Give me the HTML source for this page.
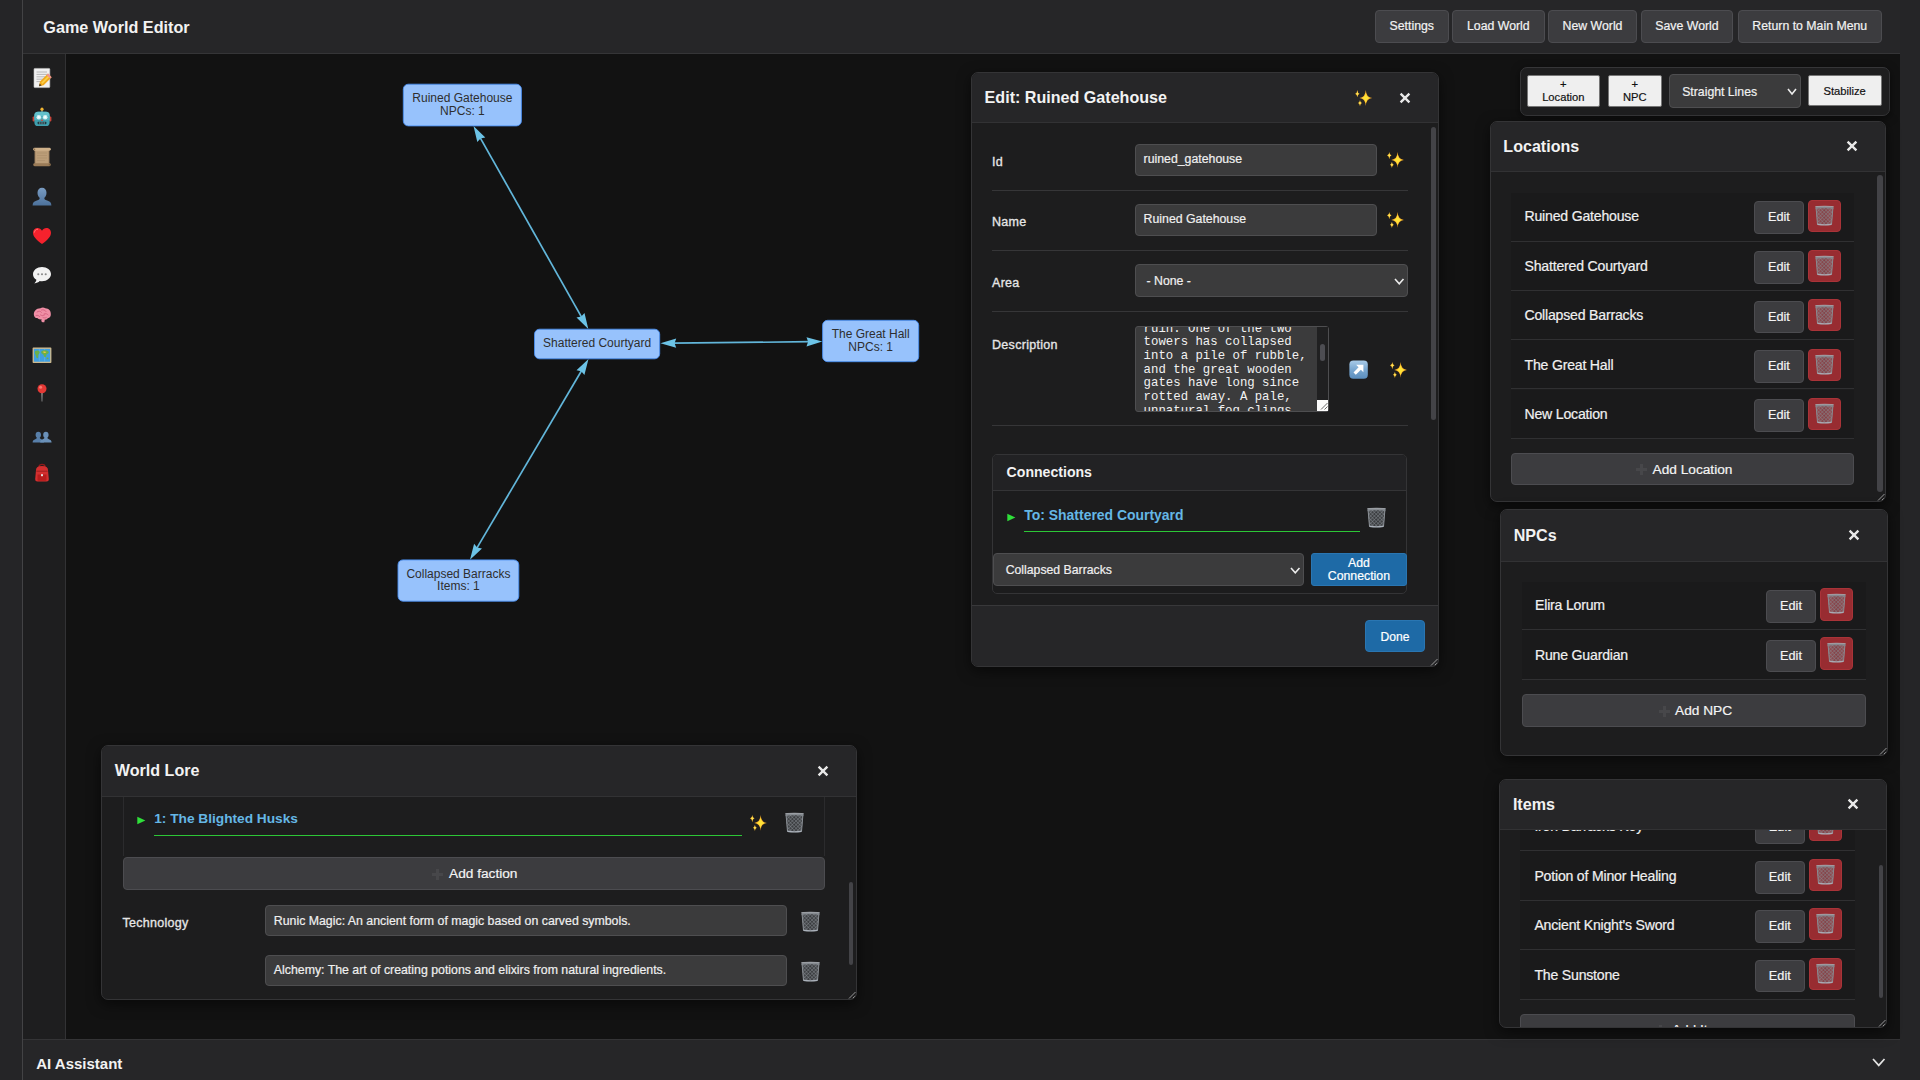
<!DOCTYPE html>
<html lang="en"><head><meta charset="utf-8"><title>Game World Editor</title>
<style>
*{box-sizing:border-box;margin:0;padding:0}
button{font:inherit;color:inherit;display:block;text-align:left;outline:0;appearance:none;-webkit-appearance:none;cursor:pointer}
html,body{width:1920px;height:1080px;overflow:hidden}
body{background:#252527;font-family:"Liberation Sans",sans-serif;color:#e6e6e6;font-size:13px;position:relative}
.abs,.ic,.panel,.btn,.inp,.row,.t,.ln{position:absolute}
.ic{display:block;overflow:visible}
.t{white-space:nowrap;line-height:1;-webkit-text-stroke:.2px}
.b{font-weight:700;-webkit-text-stroke:0}
#hdr{left:23px;top:0;width:1877px;height:54px;background:#262628;border-bottom:1px solid #353537}
#lline{left:22px;top:0;width:1px;height:1080px;background:#434345}
#side{left:23px;top:54px;width:43px;height:985px;background:#1e1e1f;border-right:1px solid #323234}
#canvas{left:66px;top:54px;width:1834px;height:985px;background:#121212}
#bot{left:23px;top:1039px;width:1877px;height:41px;background:#262628;border-top:1px solid #343436}
.btn{background:#3c3c3f;border:1px solid #4c4c50;border-radius:4px}
.lbtn{background:#efefef;border:1px solid #767676;border-radius:2px}
.panel{background:#1d1d1e;border:1px solid #343436;border-radius:7px;box-shadow:0 4px 14px rgba(0,0,0,.55);overflow:hidden}
.ph{left:0;top:0;right:0;background:#262628;border-bottom:1px solid #323234}
.inp{background:#3b3b3c;border:1px solid #4e4e50;border-radius:4px}
.row{background:#1a1a1b;border-bottom:1px solid #303032}
.del{background:#982c31;border:1px solid #a93338;border-radius:4px}
.sep{height:1px;background:#363638}
.sb{background:#434347;border-radius:3px}
.blue{background:#1e6aa6;border:1px solid #2a76b2;border-radius:3px}
</style></head><body>

<svg class="ic" style="left:0;top:0" width="0" height="0"><defs><pattern id="mesh" width="2.6" height="2.6" patternUnits="userSpaceOnUse" patternTransform="rotate(45)"><path d="M0,0H2.6M0,0V2.6" stroke="#878c92" stroke-width=".85"/></pattern><linearGradient id="tg" x1="0" y1="0" x2="1" y2="0"><stop offset="0" stop-color="#8c9197"/><stop offset=".5" stop-color="#63686e"/><stop offset="1" stop-color="#8c9197"/></linearGradient></defs></svg>
<div class="abs" id="lline"></div>
<div class="abs" id="hdr"></div>
<div class="abs" id="side"></div>
<div class="abs" id="canvas"></div>
<div class="abs" id="bot"></div>
<span class="t b" style="left:43.30px;top:18.99px;font-size:16.2px;color:#f2f2f2;">Game World Editor</span>
<button class="abs btn" style="left:1375.00px;top:10.00px;width:73.50px;height:33.00px;"><span class="t" style="left:-264.25px;width:600px;text-align:center;top:9.29px;font-size:12.3px;color:#f2f2f2;">Settings</span></button>
<button class="abs btn" style="left:1452.00px;top:10.00px;width:92.70px;height:33.00px;"><span class="t" style="left:-254.65px;width:600px;text-align:center;top:9.29px;font-size:12.3px;color:#f2f2f2;">Load World</span></button>
<button class="abs btn" style="left:1548.00px;top:10.00px;width:89.00px;height:33.00px;"><span class="t" style="left:-256.50px;width:600px;text-align:center;top:9.29px;font-size:12.3px;color:#f2f2f2;">New World</span></button>
<button class="abs btn" style="left:1641.00px;top:10.00px;width:92.00px;height:33.00px;"><span class="t" style="left:-255.00px;width:600px;text-align:center;top:9.29px;font-size:12.3px;color:#f2f2f2;">Save World</span></button>
<button class="abs btn" style="left:1737.50px;top:10.00px;width:144.50px;height:33.00px;"><span class="t" style="left:-228.75px;width:600px;text-align:center;top:9.29px;font-size:12.3px;color:#f2f2f2;">Return to Main Menu</span></button>
<svg class="ic" style="left:32px;top:67.6px" width="20" height="20" viewBox="0 0 20 20"><rect x="2" y=".4" width="15.800" height="19.200" rx=".8" fill="#f0f0f0" stroke="#c4c4c4" stroke-width=".6"/><path d="M4.500,4H15M4.500,6.400H15M4.500,8.800H13M4.500,11.200H11M4.500,13.600H9" stroke="#a8a8a8" stroke-width=".8"/><path d="M16,5.600 L19.600,9.200 L11.600,17.200 L7,18.200 L8,13.600Z" fill="#f0a81a"/><path d="M17.200,6.800 L18.400,8 L10.400,16 L9.200,14.800Z" fill="#f9d04a"/><path d="M16,5.600 L19.600,9.200 L18.300,10.500 L14.700,6.900Z" fill="#ee8f9a"/><path d="M7,18.200 L7.600,15.600 L9.600,17.600Z" fill="#4a3b2a"/></svg>
<svg class="ic" style="left:32px;top:106.8px" width="20" height="20" viewBox="0 0 20 20"><rect x="9.300" y="2.500" width="1.400" height="3" fill="#8f9aa0"/><circle cx="10" cy="2.200" r="1.600" fill="#f2b632"/><rect x=".6" y="9.500" width="2.600" height="5" rx="1.100" fill="#c8443a"/><rect x="16.800" y="9.500" width="2.600" height="5" rx="1.100" fill="#c8443a"/><rect x="2.400" y="4.800" width="15.200" height="14.200" rx="3.600" fill="#3f9fae"/><rect x="2.400" y="4.800" width="15.200" height="8" rx="3.600" fill="#62c0cc"/><rect x="2.400" y="9" width="15.200" height="4" fill="#52b1be"/><circle cx="6.800" cy="10.200" r="2.300" fill="#d5f1f5"/><circle cx="13.200" cy="10.200" r="2.300" fill="#d5f1f5"/><circle cx="6.800" cy="10.200" r="1.100" fill="#f7ffff"/><circle cx="13.200" cy="10.200" r="1.100" fill="#f7ffff"/><path d="M10,11.800l1.100,2.100h-2.200z" fill="#d0483e"/><rect x="5.600" y="14.800" width="8.800" height="2.500" rx=".7" fill="#1f3a42"/><path d="M7.800,14.800v2.500M10,14.800v2.500M12.200,14.800v2.500" stroke="#9fc4cc" stroke-width=".6"/></svg>
<svg class="ic" style="left:32px;top:147px" width="20" height="20" viewBox="0 0 20 20"><rect x="2.600" y="2" width="14.800" height="16" fill="#a98b68"/><rect x="3.800" y="3.200" width="12.400" height="13.600" fill="#bb9d78"/><path d="M5,6h10M5,8.500h10M5,11h10M5,13.500h8" stroke="#ad8f6b" stroke-width=".7"/><rect x="1.200" y=".8" width="17.600" height="2.900" rx="1.450" fill="#cfb18a"/><rect x="1.200" y="16.300" width="17.600" height="2.900" rx="1.450" fill="#9a7b57"/><circle cx="2.500" cy="2.250" r=".8" fill="#8a6c49"/><circle cx="17.500" cy="17.750" r=".8" fill="#7c5f3f"/></svg>
<svg class="ic" style="left:32px;top:186.6px" width="20" height="20" viewBox="0 0 20 20"><defs><linearGradient id="bg1" x1="0" y1="0" x2="0" y2="1"><stop offset="0" stop-color="#7a9cc2"/><stop offset="1" stop-color="#4c719b"/></linearGradient></defs><path d="M10,.8c2.800,0 4.500,2.100 4.500,4.900c0,2.400-1,4.100-2.100,5c-.3,1.600 .6,2.100 2.700,2.800c2.500,.9 4.300,1.800 4.300,4.900H.6c0-3.100 1.800-4 4.300-4.900c2.100-.7 3-1.200 2.700-2.800c-1.100-.9-2.100-2.600-2.100-5c0-2.800 1.700-4.900 4.500-4.900z" fill="url(#bg1)"/></svg>
<svg class="ic" style="left:32px;top:226px" width="20" height="20" viewBox="0 0 20 20"><path d="M10,18 C4,13.500 1,10.300 1,6.700 C1,3.900 3.100,2 5.600,2 C7.400,2 9,3 10,4.700 C11,3 12.600,2 14.400,2 C16.900,2 19,3.900 19,6.700 C19,10.300 16,13.500 10,18Z" fill="#f5222d"/><path d="M5.600,3.200c-1.600,0-3,1.200-3.200,3" stroke="#ff7875" stroke-width="1" fill="none" stroke-linecap="round"/></svg>
<svg class="ic" style="left:32px;top:265px" width="20" height="20" viewBox="0 0 20 20"><path d="M10,2C5,2 1,5.200 1,9.200c0,2.300 1.300,4.300 3.400,5.600c-.2,1.400-1,2.700-2,3.600c2.200-.1 4.100-1 5.300-2.300c.7,.1 1.500,.2 2.300,.2c5,0 9-3.200 9-7.200S15,2 10,2z" fill="#f2f2f2"/><circle cx="6.300" cy="9.200" r="1.050" fill="#8a8a8a"/><circle cx="10" cy="9.200" r="1.050" fill="#8a8a8a"/><circle cx="13.700" cy="9.200" r="1.050" fill="#8a8a8a"/></svg>
<svg class="ic" style="left:32px;top:304.5px" width="20" height="20" viewBox="0 0 20 20"><path d="M2,10.500C1.200,6.500 4,3.200 8.500,3.200c1.200-.9 3.500-.9 4.800,0c3.500,.2 5.700,2.600 5.500,5.600c.4,2.300-.9,4.100-3,4.500c-.6,1-1.700,1.500-2.900,1.300l-.6,2.600c-1.300,.4-2.600,0-3-1.200l.2-1.700c-1.800,.3-3.300-.2-4.200-1.200c-1.700,0-3-1-3.300-2.600z" fill="#f08fa6"/><path d="M5,7c1.500-1.300 3.500-1 4.400,.3M9.500,5c1.800-.6 3.700,0 4.500,1.500M12,9c1.500-.7 3.300-.3 4.200,1M4,10.500c1.500-.6 3,0 3.700,1.200M8.500,10c1.200,.8 2.800,.8 4,0M11,12.500c1,.6 2.300,.6 3.300,0" stroke="#d4607e" stroke-width=".9" fill="none" stroke-linecap="round"/></svg>
<svg class="ic" style="left:32px;top:344.5px" width="20" height="20" viewBox="0 0 20 20"><rect x=".6" y="2.6" width="18.8" height="15.400" rx=".8" fill="#cdb98f"/><rect x="1.900" y="3.900" width="16.200" height="12.800" fill="#3f9fe0"/><path d="M7.300,3.900v12.800M12.700,3.900v12.800" stroke="#64b6ec" stroke-width=".7"/><path d="M3,6.200c1.800-1.200 4-.8 4.600,.5c.5,1.400-.9,2-1.300,3.200c-.3,1.100 .3,2.600-.6,3.300c-1,.6-1.500-1-1.700-2.200c-.3-1.500-1.700-3.300-1-4.800z" fill="#6ab04c"/><path d="M9.600,6c1.600-1.100 5.400-1 6.900,.4c1,1.100-.3,2.100-1.400,2.600c-1.100,.6-.6,2.300-1.600,3.100c-.9,.6-1.500-.5-1.700-1.600c-.2-1.200-1-1.200-1.800-1.800c-.9-.6-1.200-1.900-.4-2.700z" fill="#6ab04c"/><path d="M11,6.800c1-.5 2.500-.4 3.300,.2c-.4,.9-1.600,1.200-2.600,.8z" fill="#f3c63b"/><path d="M14.600,12.800c.8-.4 1.800-.2 2.100,.5c-.2,.8-1.300,1.100-2,.7z" fill="#6ab04c"/></svg>
<svg class="ic" style="left:32px;top:383px" width="20" height="20" viewBox="0 0 20 20"><path d="M9.400,9h1.200l-.3,9.500h-.6z" fill="#b0b0b0"/><circle cx="10" cy="5.800" r="4.500" fill="#e53935"/><circle cx="8.600" cy="4.300" r="1.500" fill="#ff8a80" opacity=".8"/></svg>
<svg class="ic" style="left:32px;top:424.5px" width="20" height="20" viewBox="0 0 20 20"><path d="M6.300,6.800c1.700,0 2.700,1.200 2.700,2.900c0,1.300-.5,2.300-1.200,2.900c-.1,.9 .4,1.200 1.500,1.600c1.500,.5 2.700,1.100 2.700,3.300H.6c0-2.200 1.200-2.800 2.700-3.300c1.100-.4 1.600-.7 1.500-1.600c-.7-.6-1.200-1.600-1.200-2.900c0-1.700 1-2.900 2.700-2.900z" fill="#587fa9"/><path d="M13.900,6.800c1.700,0 2.700,1.200 2.700,2.900c0,1.300-.5,2.300-1.200,2.900c-.1,.9 .4,1.200 1.500,1.600c1.500,.5 2.700,1.100 2.700,3.300H8.200c0-2.200 1.200-2.800 2.700-3.300c1.100-.4 1.600-.7 1.500-1.600c-.7-.6-1.200-1.600-1.200-2.900c0-1.700 1-2.900 2.700-2.900z" fill="#6a90b8"/></svg>
<svg class="ic" style="left:32px;top:463px" width="20" height="20" viewBox="0 0 20 20"><path d="M7,4c0-3.500 6-3.500 6,0" fill="none" stroke="#8e1b1b" stroke-width="1.400"/><path d="M4,7c0-2.500 2-4 6-4s6,1.500 6,4l.8,9c.1,1.700-.8,2.500-2.300,2.500h-9c-1.500,0-2.400-.8-2.300-2.500z" fill="#d32f2f"/><path d="M5.500,11.500h9v5.200c0,.6-.4,1-1,1h-7c-.6,0-1-.4-1-1z" fill="#b71c1c"/><path d="M4.300,8.200h11.400" stroke="#8e1b1b" stroke-width=".8"/><rect x="9" y="11" width="2" height="2.200" rx=".4" fill="#e0e0e0"/></svg>
<span class="t b" style="left:36.20px;top:1055.80px;font-size:15px;color:#f2f2f2;">AI Assistant</span>
<svg class="ic" style="left:1871.8px;top:1058.4px" width="13.5" height="9.4" viewBox="-1 -1 13.5 9.4"><path d="M0,0L5.75,6.4L11.5,0" fill="none" stroke="#e4e4e4" stroke-width="1.7"/></svg>
<svg class="ic" style="left:66px;top:54px" width="900" height="640" viewBox="66 54 900 640">
<path d="M479.4,136.4L582.4,318.6" stroke="#62b6da" stroke-width="1.7" fill="none"/>
<path d="M588.3,329.0 L576.5,317.5 L581.3,316.6 L584.5,313.0Z" fill="#6cc3e6"/>
<path d="M473.5,126.0 L485.3,137.5 L480.5,138.4 L477.3,142.0Z" fill="#6cc3e6"/>
<path d="M672.4,343.2L810.3,341.7" stroke="#62b6da" stroke-width="1.7" fill="none"/>
<path d="M822.3,341.6 L806.5,346.4 L808.1,341.7 L806.5,337.2Z" fill="#6cc3e6"/>
<path d="M660.4,343.3 L676.2,338.5 L674.6,343.2 L676.2,347.7Z" fill="#6cc3e6"/>
<path d="M582.4,369.3L476.1,549.4" stroke="#62b6da" stroke-width="1.7" fill="none"/>
<path d="M470.0,559.7 L474.1,543.8 L477.2,547.5 L482.0,548.4Z" fill="#6cc3e6"/>
<path d="M588.5,359.0 L584.4,374.9 L581.3,371.2 L576.5,370.3Z" fill="#6cc3e6"/>
<rect x="403.3" y="84.2" width="118.1" height="41.7" rx="5" fill="#97c2fc" stroke="#4a8ff0" stroke-width=".9"/>
<text x="462.4" y="102.4" text-anchor="middle" font-family="Liberation Sans, sans-serif" font-size="12" fill="#2e2e2e">Ruined Gatehouse</text>
<text x="462.4" y="114.8" text-anchor="middle" font-family="Liberation Sans, sans-serif" font-size="12" fill="#2e2e2e">NPCs: 1</text>
<rect x="534.5" y="329.2" width="125.2" height="29.6" rx="5" fill="#97c2fc" stroke="#4a8ff0" stroke-width=".9"/>
<text x="597.1" y="347.3" text-anchor="middle" font-family="Liberation Sans, sans-serif" font-size="12" fill="#2e2e2e">Shattered Courtyard</text>
<rect x="822.6" y="320.3" width="96.1" height="41.4" rx="5" fill="#97c2fc" stroke="#4a8ff0" stroke-width=".9"/>
<text x="870.7" y="338.3" text-anchor="middle" font-family="Liberation Sans, sans-serif" font-size="12" fill="#2e2e2e">The Great Hall</text>
<text x="870.7" y="350.7" text-anchor="middle" font-family="Liberation Sans, sans-serif" font-size="12" fill="#2e2e2e">NPCs: 1</text>
<rect x="398" y="559.9" width="120.8" height="41.3" rx="5" fill="#97c2fc" stroke="#4a8ff0" stroke-width=".9"/>
<text x="458.4" y="577.8" text-anchor="middle" font-family="Liberation Sans, sans-serif" font-size="12" fill="#2e2e2e">Collapsed Barracks</text>
<text x="458.4" y="590.2" text-anchor="middle" font-family="Liberation Sans, sans-serif" font-size="12" fill="#2e2e2e">Items: 1</text>
</svg>
<div class="abs " style="left:1520.00px;top:67.00px;width:370.00px;height:49.00px;background:#1e1e1f;border:1px solid #363638;border-radius:7px;box-shadow:0 2px 8px rgba(0,0,0,.5)"></div>
<button class="abs lbtn" style="left:1526.70px;top:74.80px;width:73.30px;height:31.90px;"><span class="t" style="left:-264.40px;width:600px;text-align:center;top:2.72px;font-size:11.2px;color:#111;">+</span><span class="t" style="left:-264.40px;width:600px;text-align:center;top:15.72px;font-size:11.2px;color:#111;">Location</span></button>
<button class="abs lbtn" style="left:1607.60px;top:74.80px;width:54.40px;height:31.90px;"><span class="t" style="left:-273.80px;width:600px;text-align:center;top:2.72px;font-size:11.2px;color:#111;">+</span><span class="t" style="left:-273.80px;width:600px;text-align:center;top:15.72px;font-size:11.2px;color:#111;">NPC</span></button>
<div class="abs inp" style="left:1669.00px;top:74.30px;width:132.20px;height:33.50px;"><span class="t" style="left:12.20px;top:10.43px;font-size:12.25px;color:#f0f0f0;">Straight Lines</span><svg class="ic" style="left:117.20000000000005px;top:12.700000000000003px" width="10" height="8" viewBox="-1 -1 10 8"><path d="M0,0L4.0,5L8,0" fill="none" stroke="#ececec" stroke-width="1.6"/></svg></div>
<button class="abs lbtn" style="left:1808.00px;top:74.80px;width:73.50px;height:31.60px;"><span class="t" style="left:-264.30px;width:600px;text-align:center;top:10.32px;font-size:11.2px;color:#111;">Stabilize</span></button>
<div class="panel" style="left:1490px;top:121px;width:396px;height:381px">
<div class="abs ph" style="height:50px"></div>
<span class="t b" style="left:12.30px;top:16.17px;font-size:16.1px;color:#f2f2f2;">Locations</span>
<svg class="ic" style="left:353.20000000000005px;top:16.19999999999999px" width="16" height="16" viewBox="-8 -8 16 16"><path d="M-4.4,-4.4L4.4,4.4M4.4,-4.4L-4.4,4.4" stroke="#e8e8e8" stroke-width="2.35" stroke-linecap="butt"/></svg>
<div class="abs row" style="left:20.30px;top:71.30px;width:343.10px;height:48.45px;"></div>
<span class="t" style="left:33.50px;top:87.16px;font-size:14.1px;color:#f0f0f0;letter-spacing:-0.2px;">Ruined Gatehouse</span>
<button class="abs btn" style="left:263.00px;top:79.30px;width:49.80px;height:32.60px;"><span class="t" style="left:-276.10px;width:600px;text-align:center;top:9.05px;font-size:12.7px;color:#f4f4f4;">Edit</span></button>
<button class="abs del" style="left:317.00px;top:77.60px;width:32.80px;height:32.40px;"><svg class="ic" style="left:6.0px;top:5.0px;opacity:0.95" width="19.0" height="19.5" viewBox="0 0 19 19.5"><path d="M.7,1.200 L2.400,18.600 Q9.500,19.900 16.600,18.600 L18.300,1.200Z" fill="url(#tg)" fill-opacity=".38"/><path d="M.7,1.200 L2.400,18.600 Q9.500,19.900 16.600,18.600 L18.300,1.200Z" fill="url(#mesh)"/><path d="M1.100,2 L2.500,18.500M17.900,2 L16.500,18.500" stroke="#8a8f95" stroke-width="1" fill="none"/><path d="M2.300,17.500 Q9.500,18.900 16.700,17.500 L16.550,19 Q9.500,20.200 2.450,19Z" fill="#aab1ba"/><path d="M.4,.5 Q9.500,-.3 18.600,.5 L18.400,2.700 Q9.500,2 .6,2.700Z" fill="#868b91"/><path d="M.4,.6 Q9.500,-.2 18.600,.6" stroke="#b4b9bf" stroke-width=".7" fill="none"/></svg></button>
<div class="abs row" style="left:20.30px;top:119.75px;width:343.10px;height:49.25px;"></div>
<span class="t" style="left:33.50px;top:137.06px;font-size:14.1px;color:#f0f0f0;letter-spacing:-0.2px;">Shattered Courtyard</span>
<button class="abs btn" style="left:263.00px;top:129.20px;width:49.80px;height:32.60px;"><span class="t" style="left:-276.10px;width:600px;text-align:center;top:9.05px;font-size:12.7px;color:#f4f4f4;">Edit</span></button>
<button class="abs del" style="left:317.00px;top:127.50px;width:32.80px;height:32.40px;"><svg class="ic" style="left:6.0px;top:5.0px;opacity:0.95" width="19.0" height="19.5" viewBox="0 0 19 19.5"><path d="M.7,1.200 L2.400,18.600 Q9.500,19.900 16.600,18.600 L18.300,1.200Z" fill="url(#tg)" fill-opacity=".38"/><path d="M.7,1.200 L2.400,18.600 Q9.500,19.900 16.600,18.600 L18.300,1.200Z" fill="url(#mesh)"/><path d="M1.100,2 L2.500,18.500M17.900,2 L16.500,18.500" stroke="#8a8f95" stroke-width="1" fill="none"/><path d="M2.300,17.500 Q9.500,18.900 16.700,17.500 L16.550,19 Q9.500,20.200 2.450,19Z" fill="#aab1ba"/><path d="M.4,.5 Q9.500,-.3 18.600,.5 L18.400,2.700 Q9.500,2 .6,2.700Z" fill="#868b91"/><path d="M.4,.6 Q9.500,-.2 18.600,.6" stroke="#b4b9bf" stroke-width=".7" fill="none"/></svg></button>
<div class="abs row" style="left:20.30px;top:169.00px;width:343.10px;height:49.30px;"></div>
<span class="t" style="left:33.50px;top:186.36px;font-size:14.1px;color:#f0f0f0;letter-spacing:-0.2px;">Collapsed Barracks</span>
<button class="abs btn" style="left:263.00px;top:178.50px;width:49.80px;height:32.60px;"><span class="t" style="left:-276.10px;width:600px;text-align:center;top:9.05px;font-size:12.7px;color:#f4f4f4;">Edit</span></button>
<button class="abs del" style="left:317.00px;top:176.80px;width:32.80px;height:32.40px;"><svg class="ic" style="left:6.0px;top:5.0px;opacity:0.95" width="19.0" height="19.5" viewBox="0 0 19 19.5"><path d="M.7,1.200 L2.400,18.600 Q9.500,19.900 16.600,18.600 L18.300,1.200Z" fill="url(#tg)" fill-opacity=".38"/><path d="M.7,1.200 L2.400,18.600 Q9.500,19.900 16.600,18.600 L18.300,1.200Z" fill="url(#mesh)"/><path d="M1.100,2 L2.500,18.500M17.900,2 L16.500,18.500" stroke="#8a8f95" stroke-width="1" fill="none"/><path d="M2.300,17.500 Q9.500,18.900 16.700,17.500 L16.550,19 Q9.500,20.200 2.450,19Z" fill="#aab1ba"/><path d="M.4,.5 Q9.500,-.3 18.600,.5 L18.400,2.700 Q9.500,2 .6,2.700Z" fill="#868b91"/><path d="M.4,.6 Q9.500,-.2 18.600,.6" stroke="#b4b9bf" stroke-width=".7" fill="none"/></svg></button>
<div class="abs row" style="left:20.30px;top:218.30px;width:343.10px;height:49.20px;"></div>
<span class="t" style="left:33.50px;top:236.06px;font-size:14.1px;color:#f0f0f0;letter-spacing:-0.2px;">The Great Hall</span>
<button class="abs btn" style="left:263.00px;top:228.20px;width:49.80px;height:32.60px;"><span class="t" style="left:-276.10px;width:600px;text-align:center;top:9.05px;font-size:12.7px;color:#f4f4f4;">Edit</span></button>
<button class="abs del" style="left:317.00px;top:226.50px;width:32.80px;height:32.40px;"><svg class="ic" style="left:6.0px;top:5.0px;opacity:0.95" width="19.0" height="19.5" viewBox="0 0 19 19.5"><path d="M.7,1.200 L2.400,18.600 Q9.500,19.900 16.600,18.600 L18.300,1.200Z" fill="url(#tg)" fill-opacity=".38"/><path d="M.7,1.200 L2.400,18.600 Q9.500,19.900 16.600,18.600 L18.300,1.200Z" fill="url(#mesh)"/><path d="M1.100,2 L2.500,18.500M17.900,2 L16.500,18.500" stroke="#8a8f95" stroke-width="1" fill="none"/><path d="M2.300,17.500 Q9.500,18.900 16.700,17.500 L16.550,19 Q9.500,20.200 2.450,19Z" fill="#aab1ba"/><path d="M.4,.5 Q9.500,-.3 18.600,.5 L18.400,2.700 Q9.500,2 .6,2.700Z" fill="#868b91"/><path d="M.4,.6 Q9.500,-.2 18.600,.6" stroke="#b4b9bf" stroke-width=".7" fill="none"/></svg></button>
<div class="abs row" style="left:20.30px;top:267.50px;width:343.10px;height:49.30px;"></div>
<span class="t" style="left:33.50px;top:285.06px;font-size:14.1px;color:#f0f0f0;letter-spacing:-0.2px;">New Location</span>
<button class="abs btn" style="left:263.00px;top:277.20px;width:49.80px;height:32.60px;"><span class="t" style="left:-276.10px;width:600px;text-align:center;top:9.05px;font-size:12.7px;color:#f4f4f4;">Edit</span></button>
<button class="abs del" style="left:317.00px;top:275.50px;width:32.80px;height:32.40px;"><svg class="ic" style="left:6.0px;top:5.0px;opacity:0.95" width="19.0" height="19.5" viewBox="0 0 19 19.5"><path d="M.7,1.200 L2.400,18.600 Q9.500,19.900 16.600,18.600 L18.300,1.200Z" fill="url(#tg)" fill-opacity=".38"/><path d="M.7,1.200 L2.400,18.600 Q9.500,19.900 16.600,18.600 L18.300,1.200Z" fill="url(#mesh)"/><path d="M1.100,2 L2.500,18.500M17.900,2 L16.500,18.500" stroke="#8a8f95" stroke-width="1" fill="none"/><path d="M2.300,17.500 Q9.500,18.900 16.700,17.500 L16.550,19 Q9.500,20.200 2.450,19Z" fill="#aab1ba"/><path d="M.4,.5 Q9.500,-.3 18.600,.5 L18.400,2.700 Q9.500,2 .6,2.700Z" fill="#868b91"/><path d="M.4,.6 Q9.500,-.2 18.600,.6" stroke="#b4b9bf" stroke-width=".7" fill="none"/></svg></button>
<button class="abs btn" style="left:20.00px;top:331.30px;width:343.20px;height:31.50px;"><svg class="ic" style="left:123px;top:9.05px" width="13" height="13" viewBox="0 0 13 13"><path d="M6.5,1V12M1,6.5H12" stroke="#47474a" stroke-width="3"/></svg><span class="t" style="left:140.50px;top:8.25px;font-size:13.7px;color:#f4f4f4;">Add Location</span></button>
<div class="abs sb" style="left:386.40px;top:53.00px;width:5.50px;height:316.50px;"></div>
<svg class="ic" style="left:386px;top:371px" width="8" height="8" viewBox="0 0 8 8"><path d="M7.5,1L1,7.5M7.5,4.500L4.500,7.500" stroke="#9a9a9a" stroke-width="1"/></svg>
</div>
<div class="panel" style="left:1500px;top:509px;width:388px;height:247px">
<div class="abs ph" style="height:51.5px"></div>
<span class="t b" style="left:12.70px;top:16.67px;font-size:16.1px;color:#f2f2f2;">NPCs</span>
<svg class="ic" style="left:344.75px;top:16.700000000000045px" width="16" height="16" viewBox="-8 -8 16 16"><path d="M-4.4,-4.4L4.4,4.4M4.4,-4.4L-4.4,4.4" stroke="#e8e8e8" stroke-width="2.35" stroke-linecap="butt"/></svg>
<div class="abs row" style="left:20.50px;top:71.70px;width:344.80px;height:48.30px;"></div>
<span class="t" style="left:34.00px;top:87.86px;font-size:14.1px;color:#f0f0f0;letter-spacing:-0.2px;">Elira Lorum</span>
<button class="abs btn" style="left:265.00px;top:80.00px;width:50.00px;height:32.60px;"><span class="t" style="left:-276.00px;width:600px;text-align:center;top:9.05px;font-size:12.7px;color:#f4f4f4;">Edit</span></button>
<button class="abs del" style="left:319.00px;top:78.00px;width:32.80px;height:33.20px;"><svg class="ic" style="left:6.0px;top:5.0px;opacity:0.95" width="19.0" height="19.5" viewBox="0 0 19 19.5"><path d="M.7,1.200 L2.400,18.600 Q9.500,19.900 16.600,18.600 L18.300,1.200Z" fill="url(#tg)" fill-opacity=".38"/><path d="M.7,1.200 L2.400,18.600 Q9.500,19.900 16.600,18.600 L18.300,1.200Z" fill="url(#mesh)"/><path d="M1.100,2 L2.500,18.500M17.900,2 L16.500,18.500" stroke="#8a8f95" stroke-width="1" fill="none"/><path d="M2.300,17.500 Q9.500,18.900 16.700,17.500 L16.550,19 Q9.500,20.200 2.450,19Z" fill="#aab1ba"/><path d="M.4,.5 Q9.500,-.3 18.600,.5 L18.400,2.700 Q9.500,2 .6,2.700Z" fill="#868b91"/><path d="M.4,.6 Q9.500,-.2 18.600,.6" stroke="#b4b9bf" stroke-width=".7" fill="none"/></svg></button>
<div class="abs row" style="left:20.50px;top:120.00px;width:344.80px;height:50.00px;"></div>
<span class="t" style="left:34.00px;top:137.66px;font-size:14.1px;color:#f0f0f0;letter-spacing:-0.2px;">Rune Guardian</span>
<button class="abs btn" style="left:265.00px;top:129.80px;width:50.00px;height:32.60px;"><span class="t" style="left:-276.00px;width:600px;text-align:center;top:9.05px;font-size:12.7px;color:#f4f4f4;">Edit</span></button>
<button class="abs del" style="left:319.00px;top:127.00px;width:32.80px;height:33.20px;"><svg class="ic" style="left:6.0px;top:5.0px;opacity:0.95" width="19.0" height="19.5" viewBox="0 0 19 19.5"><path d="M.7,1.200 L2.400,18.600 Q9.500,19.900 16.600,18.600 L18.300,1.200Z" fill="url(#tg)" fill-opacity=".38"/><path d="M.7,1.200 L2.400,18.600 Q9.500,19.900 16.600,18.600 L18.300,1.200Z" fill="url(#mesh)"/><path d="M1.100,2 L2.500,18.500M17.900,2 L16.500,18.500" stroke="#8a8f95" stroke-width="1" fill="none"/><path d="M2.300,17.500 Q9.500,18.900 16.700,17.500 L16.550,19 Q9.500,20.200 2.450,19Z" fill="#aab1ba"/><path d="M.4,.5 Q9.500,-.3 18.600,.5 L18.400,2.700 Q9.500,2 .6,2.700Z" fill="#868b91"/><path d="M.4,.6 Q9.500,-.2 18.600,.6" stroke="#b4b9bf" stroke-width=".7" fill="none"/></svg></button>
<button class="abs btn" style="left:20.50px;top:183.70px;width:344.80px;height:33.30px;"><svg class="ic" style="left:135.0999999999999px;top:9.949999999999978px" width="13" height="13" viewBox="0 0 13 13"><path d="M6.5,1V12M1,6.5H12" stroke="#47474a" stroke-width="3"/></svg><span class="t" style="left:152.50px;top:9.15px;font-size:13.7px;color:#f4f4f4;">Add NPC</span></button>
<svg class="ic" style="left:378px;top:237px" width="8" height="8" viewBox="0 0 8 8"><path d="M7.5,1L1,7.5M7.5,4.500L4.500,7.500" stroke="#9a9a9a" stroke-width="1"/></svg>
</div>
<div class="panel" style="left:1499px;top:779px;width:388px;height:249.29999999999995px">
<div class="abs ph" style="height:50px"></div>
<span class="t b" style="left:12.90px;top:15.97px;font-size:16.1px;color:#f2f2f2;">Items</span>
<svg class="ic" style="left:345px;top:15.899999999999977px" width="16" height="16" viewBox="-8 -8 16 16"><path d="M-4.4,-4.4L4.4,4.4M4.4,-4.4L-4.4,4.4" stroke="#e8e8e8" stroke-width="2.35" stroke-linecap="butt"/></svg>
<div class="abs" style="left:0;top:50px;width:386px;height:197.29999999999995px;overflow:hidden">
<div class="abs row" style="left:20.20px;top:-28.00px;width:335.00px;height:49.30px;"></div>
<span class="t" style="left:34.40px;top:-11.14px;font-size:14.1px;color:#f0f0f0;letter-spacing:-0.2px;">Iron Barracks Key</span>
<button class="abs btn" style="left:254.80px;top:-19.00px;width:50.00px;height:32.60px;"><span class="t" style="left:-276.00px;width:600px;text-align:center;top:9.05px;font-size:12.7px;color:#f4f4f4;">Edit</span></button>
<button class="abs del" style="left:308.75px;top:-21.30px;width:32.95px;height:32.40px;"><svg class="ic" style="left:6.0px;top:5.0px;opacity:0.95" width="19.0" height="19.5" viewBox="0 0 19 19.5"><path d="M.7,1.200 L2.400,18.600 Q9.500,19.900 16.600,18.600 L18.300,1.200Z" fill="url(#tg)" fill-opacity=".38"/><path d="M.7,1.200 L2.400,18.600 Q9.500,19.900 16.600,18.600 L18.300,1.200Z" fill="url(#mesh)"/><path d="M1.100,2 L2.500,18.500M17.900,2 L16.500,18.500" stroke="#8a8f95" stroke-width="1" fill="none"/><path d="M2.300,17.500 Q9.500,18.900 16.700,17.500 L16.550,19 Q9.500,20.200 2.450,19Z" fill="#aab1ba"/><path d="M.4,.5 Q9.500,-.3 18.600,.5 L18.400,2.700 Q9.500,2 .6,2.700Z" fill="#868b91"/><path d="M.4,.6 Q9.500,-.2 18.600,.6" stroke="#b4b9bf" stroke-width=".7" fill="none"/></svg></button>
<div class="abs row" style="left:20.20px;top:21.30px;width:335.00px;height:49.90px;"></div>
<span class="t" style="left:34.40px;top:38.86px;font-size:14.1px;color:#f0f0f0;letter-spacing:-0.2px;">Potion of Minor Healing</span>
<button class="abs btn" style="left:254.80px;top:31.00px;width:50.00px;height:32.60px;"><span class="t" style="left:-276.00px;width:600px;text-align:center;top:9.05px;font-size:12.7px;color:#f4f4f4;">Edit</span></button>
<button class="abs del" style="left:308.75px;top:28.70px;width:32.95px;height:32.40px;"><svg class="ic" style="left:6.0px;top:5.0px;opacity:0.95" width="19.0" height="19.5" viewBox="0 0 19 19.5"><path d="M.7,1.200 L2.400,18.600 Q9.500,19.900 16.600,18.600 L18.300,1.200Z" fill="url(#tg)" fill-opacity=".38"/><path d="M.7,1.200 L2.400,18.600 Q9.500,19.900 16.600,18.600 L18.300,1.200Z" fill="url(#mesh)"/><path d="M1.100,2 L2.500,18.500M17.900,2 L16.500,18.500" stroke="#8a8f95" stroke-width="1" fill="none"/><path d="M2.300,17.500 Q9.500,18.900 16.700,17.500 L16.550,19 Q9.500,20.200 2.450,19Z" fill="#aab1ba"/><path d="M.4,.5 Q9.500,-.3 18.600,.5 L18.400,2.700 Q9.500,2 .6,2.700Z" fill="#868b91"/><path d="M.4,.6 Q9.500,-.2 18.600,.6" stroke="#b4b9bf" stroke-width=".7" fill="none"/></svg></button>
<div class="abs row" style="left:20.20px;top:71.20px;width:335.00px;height:48.90px;"></div>
<span class="t" style="left:34.40px;top:88.06px;font-size:14.1px;color:#f0f0f0;letter-spacing:-0.2px;">Ancient Knight's Sword</span>
<button class="abs btn" style="left:254.80px;top:80.20px;width:50.00px;height:32.60px;"><span class="t" style="left:-276.00px;width:600px;text-align:center;top:9.05px;font-size:12.7px;color:#f4f4f4;">Edit</span></button>
<button class="abs del" style="left:308.75px;top:77.90px;width:32.95px;height:32.40px;"><svg class="ic" style="left:6.0px;top:5.0px;opacity:0.95" width="19.0" height="19.5" viewBox="0 0 19 19.5"><path d="M.7,1.200 L2.400,18.600 Q9.500,19.900 16.600,18.600 L18.300,1.200Z" fill="url(#tg)" fill-opacity=".38"/><path d="M.7,1.200 L2.400,18.600 Q9.500,19.900 16.600,18.600 L18.300,1.200Z" fill="url(#mesh)"/><path d="M1.100,2 L2.500,18.500M17.900,2 L16.500,18.500" stroke="#8a8f95" stroke-width="1" fill="none"/><path d="M2.300,17.500 Q9.500,18.900 16.700,17.500 L16.550,19 Q9.500,20.200 2.450,19Z" fill="#aab1ba"/><path d="M.4,.5 Q9.500,-.3 18.600,.5 L18.400,2.700 Q9.500,2 .6,2.700Z" fill="#868b91"/><path d="M.4,.6 Q9.500,-.2 18.600,.6" stroke="#b4b9bf" stroke-width=".7" fill="none"/></svg></button>
<div class="abs row" style="left:20.20px;top:120.10px;width:335.00px;height:50.00px;"></div>
<span class="t" style="left:34.40px;top:137.66px;font-size:14.1px;color:#f0f0f0;letter-spacing:-0.2px;">The Sunstone</span>
<button class="abs btn" style="left:254.80px;top:129.80px;width:50.00px;height:32.60px;"><span class="t" style="left:-276.00px;width:600px;text-align:center;top:9.05px;font-size:12.7px;color:#f4f4f4;">Edit</span></button>
<button class="abs del" style="left:308.75px;top:127.50px;width:32.95px;height:32.40px;"><svg class="ic" style="left:6.0px;top:5.0px;opacity:0.95" width="19.0" height="19.5" viewBox="0 0 19 19.5"><path d="M.7,1.200 L2.400,18.600 Q9.500,19.900 16.600,18.600 L18.300,1.200Z" fill="url(#tg)" fill-opacity=".38"/><path d="M.7,1.200 L2.400,18.600 Q9.500,19.900 16.600,18.600 L18.300,1.200Z" fill="url(#mesh)"/><path d="M1.100,2 L2.500,18.500M17.900,2 L16.500,18.500" stroke="#8a8f95" stroke-width="1" fill="none"/><path d="M2.300,17.500 Q9.500,18.900 16.700,17.500 L16.550,19 Q9.500,20.200 2.450,19Z" fill="#aab1ba"/><path d="M.4,.5 Q9.500,-.3 18.600,.5 L18.400,2.700 Q9.500,2 .6,2.700Z" fill="#868b91"/><path d="M.4,.6 Q9.500,-.2 18.600,.6" stroke="#b4b9bf" stroke-width=".7" fill="none"/></svg></button>
<button class="abs btn" style="left:20.20px;top:183.50px;width:335.00px;height:32.50px;"><svg class="ic" style="left:133.29999999999995px;top:9.55px" width="13" height="13" viewBox="0 0 13 13"><path d="M6.5,1V12M1,6.5H12" stroke="#47474a" stroke-width="3"/></svg><span class="t" style="left:150.70px;top:8.75px;font-size:13.7px;color:#f4f4f4;">Add Item</span></button>
</div>
<div class="abs sb" style="left:378.75px;top:84.80px;width:4.25px;height:133.20px;"></div>
<svg class="ic" style="left:378px;top:239.29999999999995px" width="8" height="8" viewBox="0 0 8 8"><path d="M7.5,1L1,7.5M7.5,4.500L4.500,7.500" stroke="#9a9a9a" stroke-width="1"/></svg>
</div>
<div class="panel" style="left:971px;top:72px;width:468px;height:594.6px">
<div class="abs ph" style="height:50px"></div>
<span class="t b" style="left:12.60px;top:16.47px;font-size:16.1px;color:#f2f2f2;">Edit: Ruined Gatehouse</span>
<svg class="ic" style="left:425px;top:16.5px" width="16" height="16" viewBox="-8 -8 16 16"><path d="M-4.4,-4.4L4.4,4.4M4.4,-4.4L-4.4,4.4" stroke="#e8e8e8" stroke-width="2.35" stroke-linecap="butt"/></svg>
<svg class="ic" style="left:383.20000000000005px;top:17px" width="17.3" height="16.3" viewBox="0 0 17 16"><path d="M10.6,0.10000000000000053 Q11.041,7.354 16.9,7.9 Q11.041,8.446 10.6,15.7 Q10.158999999999999,8.446 4.3,7.9 Q10.158999999999999,7.354 10.6,0.10000000000000053Z" fill="#f5a928"/><path d="M10.6,2.5 Q11.272,7.0360000000000005 14.8,7.9 Q11.272,8.764000000000001 10.6,13.3 Q9.927999999999999,8.764000000000001 6.3999999999999995,7.9 Q9.927999999999999,7.0360000000000005 10.6,2.5Z" fill="#ffe338"/><path d="M2.3,0.0 Q2.564,3.168 4.5,3.6 Q2.564,4.032 2.3,7.2 Q2.0359999999999996,4.032 0.09999999999999964,3.6 Q2.0359999999999996,3.168 2.3,0.0Z" fill="#fbc02f"/><path d="M2.3,1.6 Q2.6599999999999997,3.0 3.5,3.6 Q2.6599999999999997,4.2 2.3,5.6 Q1.94,4.2 1.0999999999999999,3.6 Q1.94,3.0 2.3,1.6Z" fill="#ffe45a"/><path d="M4.9,9.700000000000001 Q5.140000000000001,12.428 6.9,12.8 Q5.140000000000001,13.172 4.9,15.9 Q4.66,13.172 2.9000000000000004,12.8 Q4.66,12.428 4.9,9.700000000000001Z" fill="#fbc02f"/><path d="M4.9,11.100000000000001 Q5.23,12.290000000000001 6.0,12.8 Q5.23,13.31 4.9,14.5 Q4.57,13.31 3.8000000000000003,12.8 Q4.57,12.290000000000001 4.9,11.100000000000001Z" fill="#ffe45a"/></svg>
<span class="t" style="left:20.00px;top:83.12px;font-size:12.5px;color:#e6e6e6;letter-spacing:0.3px;-webkit-text-stroke:.32px;">Id</span>
<div class="abs inp" style="left:163.00px;top:71.30px;width:242.30px;height:31.50px;"><span class="t" style="left:7.60px;top:8.09px;font-size:12.3px;color:#efefef;">ruined_gatehouse</span></div>
<svg class="ic" style="left:415.29999999999995px;top:79.30000000000001px" width="17.0" height="16.0" viewBox="0 0 17 16"><path d="M10.6,0.10000000000000053 Q11.041,7.354 16.9,7.9 Q11.041,8.446 10.6,15.7 Q10.158999999999999,8.446 4.3,7.9 Q10.158999999999999,7.354 10.6,0.10000000000000053Z" fill="#f5a928"/><path d="M10.6,2.5 Q11.272,7.0360000000000005 14.8,7.9 Q11.272,8.764000000000001 10.6,13.3 Q9.927999999999999,8.764000000000001 6.3999999999999995,7.9 Q9.927999999999999,7.0360000000000005 10.6,2.5Z" fill="#ffe338"/><path d="M2.3,0.0 Q2.564,3.168 4.5,3.6 Q2.564,4.032 2.3,7.2 Q2.0359999999999996,4.032 0.09999999999999964,3.6 Q2.0359999999999996,3.168 2.3,0.0Z" fill="#fbc02f"/><path d="M2.3,1.6 Q2.6599999999999997,3.0 3.5,3.6 Q2.6599999999999997,4.2 2.3,5.6 Q1.94,4.2 1.0999999999999999,3.6 Q1.94,3.0 2.3,1.6Z" fill="#ffe45a"/><path d="M4.9,9.700000000000001 Q5.140000000000001,12.428 6.9,12.8 Q5.140000000000001,13.172 4.9,15.9 Q4.66,13.172 2.9000000000000004,12.8 Q4.66,12.428 4.9,9.700000000000001Z" fill="#fbc02f"/><path d="M4.9,11.100000000000001 Q5.23,12.290000000000001 6.0,12.8 Q5.23,13.31 4.9,14.5 Q4.57,13.31 3.8000000000000003,12.8 Q4.57,12.290000000000001 4.9,11.100000000000001Z" fill="#ffe45a"/></svg>
<div class="abs sep" style="left:20px;top:117px;width:416px"></div>
<span class="t" style="left:20.00px;top:143.32px;font-size:12.5px;color:#e6e6e6;letter-spacing:0.3px;-webkit-text-stroke:.32px;">Name</span>
<div class="abs inp" style="left:163.00px;top:131.30px;width:242.30px;height:31.50px;"><span class="t" style="left:7.60px;top:7.89px;font-size:12.3px;color:#efefef;">Ruined Gatehouse</span></div>
<svg class="ic" style="left:415.29999999999995px;top:139.3px" width="17.0" height="16.0" viewBox="0 0 17 16"><path d="M10.6,0.10000000000000053 Q11.041,7.354 16.9,7.9 Q11.041,8.446 10.6,15.7 Q10.158999999999999,8.446 4.3,7.9 Q10.158999999999999,7.354 10.6,0.10000000000000053Z" fill="#f5a928"/><path d="M10.6,2.5 Q11.272,7.0360000000000005 14.8,7.9 Q11.272,8.764000000000001 10.6,13.3 Q9.927999999999999,8.764000000000001 6.3999999999999995,7.9 Q9.927999999999999,7.0360000000000005 10.6,2.5Z" fill="#ffe338"/><path d="M2.3,0.0 Q2.564,3.168 4.5,3.6 Q2.564,4.032 2.3,7.2 Q2.0359999999999996,4.032 0.09999999999999964,3.6 Q2.0359999999999996,3.168 2.3,0.0Z" fill="#fbc02f"/><path d="M2.3,1.6 Q2.6599999999999997,3.0 3.5,3.6 Q2.6599999999999997,4.2 2.3,5.6 Q1.94,4.2 1.0999999999999999,3.6 Q1.94,3.0 2.3,1.6Z" fill="#ffe45a"/><path d="M4.9,9.700000000000001 Q5.140000000000001,12.428 6.9,12.8 Q5.140000000000001,13.172 4.9,15.9 Q4.66,13.172 2.9000000000000004,12.8 Q4.66,12.428 4.9,9.700000000000001Z" fill="#fbc02f"/><path d="M4.9,11.100000000000001 Q5.23,12.290000000000001 6.0,12.8 Q5.23,13.31 4.9,14.5 Q4.57,13.31 3.8000000000000003,12.8 Q4.57,12.290000000000001 4.9,11.100000000000001Z" fill="#ffe45a"/></svg>
<div class="abs sep" style="left:20px;top:177px;width:416px"></div>
<span class="t" style="left:20.00px;top:204.02px;font-size:12.5px;color:#e6e6e6;letter-spacing:0.3px;-webkit-text-stroke:.32px;">Area</span>
<div class="abs inp" style="left:163.00px;top:191.30px;width:273.00px;height:33.20px;"><span class="t" style="left:10.50px;top:9.89px;font-size:12.3px;color:#efefef;">- None -</span></div>
<svg class="ic" style="left:421.5999999999999px;top:205.3px" width="10.5" height="7.8" viewBox="-1 -1 10.5 7.8"><path d="M0,0L4.25,4.8L8.5,0" fill="none" stroke="#ececec" stroke-width="1.6"/></svg>
<div class="abs sep" style="left:20px;top:238px;width:416px"></div>
<span class="t" style="left:20.00px;top:266.12px;font-size:12.5px;color:#e6e6e6;letter-spacing:0.3px;-webkit-text-stroke:.32px;">Description</span>
<div class="abs inp" style="left:163.00px;top:253.00px;width:194.00px;height:85.60px;border-radius:3px"></div>
<div class="abs" style="left:164px;top:254px;width:181px;height:83.6px;overflow:hidden">
<div style="position:absolute;left:7.6px;top:-4.4px;font-family:'Liberation Mono','DejaVu Sans Mono',monospace;font-size:12.35px;line-height:13.65px;color:#f2f2f2;white-space:pre">ruin. One of the two
towers has collapsed
into a pile of rubble,
and the great wooden
gates have long since
rotted away. A pale,
unnatural fog clings</div></div>
<div class="abs " style="left:345.10px;top:254.00px;width:10.90px;height:83.70px;background:#202021"></div>
<div class="abs " style="left:347.90px;top:270.60px;width:5.10px;height:17.10px;background:#4d4d52;border-radius:3px"></div>
<div class="abs " style="left:345.10px;top:327.40px;width:10.90px;height:10.30px;background:#fbfbfb"></div>
<svg class="ic" style="left:347.5px;top:329.2px" width="8" height="8" viewBox="0 0 8 8"><path d="M7.500,1L1,7.500M7.500,4.500L4.500,7.500" stroke="#6a6a6a" stroke-width="1"/></svg>
<svg class="ic" style="left:377px;top:287px" width="19.200" height="19.300" viewBox="0 0 20 20"><defs><linearGradient id="ag" x1="0" y1="0" x2="0" y2="1"><stop offset="0" stop-color="#a9cbe8"/><stop offset=".5" stop-color="#79a7d0"/><stop offset="1" stop-color="#5a8dbd"/></linearGradient></defs><rect x=".4" y=".4" width="19.2" height="19.2" rx="4.2" fill="url(#ag)"/><path d="M7.400,5h7.600v7.600l-2.600-2.600-5.300,5.300-2.400-2.400 5.300-5.300z" fill="#fff"/></svg>
<svg class="ic" style="left:418.29999999999995px;top:289px" width="17.0" height="16.0" viewBox="0 0 17 16"><path d="M10.6,0.10000000000000053 Q11.041,7.354 16.9,7.9 Q11.041,8.446 10.6,15.7 Q10.158999999999999,8.446 4.3,7.9 Q10.158999999999999,7.354 10.6,0.10000000000000053Z" fill="#f5a928"/><path d="M10.6,2.5 Q11.272,7.0360000000000005 14.8,7.9 Q11.272,8.764000000000001 10.6,13.3 Q9.927999999999999,8.764000000000001 6.3999999999999995,7.9 Q9.927999999999999,7.0360000000000005 10.6,2.5Z" fill="#ffe338"/><path d="M2.3,0.0 Q2.564,3.168 4.5,3.6 Q2.564,4.032 2.3,7.2 Q2.0359999999999996,4.032 0.09999999999999964,3.6 Q2.0359999999999996,3.168 2.3,0.0Z" fill="#fbc02f"/><path d="M2.3,1.6 Q2.6599999999999997,3.0 3.5,3.6 Q2.6599999999999997,4.2 2.3,5.6 Q1.94,4.2 1.0999999999999999,3.6 Q1.94,3.0 2.3,1.6Z" fill="#ffe45a"/><path d="M4.9,9.700000000000001 Q5.140000000000001,12.428 6.9,12.8 Q5.140000000000001,13.172 4.9,15.9 Q4.66,13.172 2.9000000000000004,12.8 Q4.66,12.428 4.9,9.700000000000001Z" fill="#fbc02f"/><path d="M4.9,11.100000000000001 Q5.23,12.290000000000001 6.0,12.8 Q5.23,13.31 4.9,14.5 Q4.57,13.31 3.8000000000000003,12.8 Q4.57,12.290000000000001 4.9,11.100000000000001Z" fill="#ffe45a"/></svg>
<div class="abs sep" style="left:20px;top:352px;width:416px"></div>
<div class="abs " style="left:20.40px;top:380.70px;width:415.00px;height:140.00px;border:1px solid #343436;border-radius:5px;background:#1c1c1d"></div>
<div class="abs " style="left:21.40px;top:381.70px;width:413.00px;height:36.80px;background:#222224;border-bottom:1px solid #343436;border-radius:4px 4px 0 0"></div>
<span class="t b" style="left:34.60px;top:392.26px;font-size:14.1px;color:#f2f2f2;">Connections</span>
<svg class="ic" style="left:34.700000000000045px;top:439.6px" width="9" height="9" viewBox="0 0 9 9"><path d="M.3,.7L8.400,4.500L.3,8.300z" fill="#2fe03a"/></svg>
<span class="t b" style="left:52.30px;top:435.79px;font-size:13.95px;color:#65b7e5;">To: Shattered Courtyard</span>
<div class="abs " style="left:52.00px;top:457.50px;width:336.20px;height:1.10px;background:#2cc636"></div>
<svg class="ic" style="left:395.20000000000005px;top:434.8px;opacity:1" width="19.0" height="19.5" viewBox="0 0 19 19.5"><path d="M.7,1.200 L2.400,18.600 Q9.500,19.900 16.600,18.600 L18.300,1.200Z" fill="url(#tg)" fill-opacity=".38"/><path d="M.7,1.200 L2.400,18.600 Q9.500,19.900 16.600,18.600 L18.300,1.200Z" fill="url(#mesh)"/><path d="M1.100,2 L2.500,18.500M17.900,2 L16.500,18.500" stroke="#8a8f95" stroke-width="1" fill="none"/><path d="M2.300,17.500 Q9.500,18.900 16.700,17.500 L16.550,19 Q9.500,20.200 2.450,19Z" fill="#aab1ba"/><path d="M.4,.5 Q9.500,-.3 18.600,.5 L18.400,2.700 Q9.500,2 .6,2.700Z" fill="#868b91"/><path d="M.4,.6 Q9.500,-.2 18.600,.6" stroke="#b4b9bf" stroke-width=".7" fill="none"/></svg>
<div class="abs inp" style="left:21.40px;top:480.40px;width:310.60px;height:33.00px;"><span class="t" style="left:11.30px;top:9.43px;font-size:12.25px;color:#efefef;">Collapsed Barracks</span></div>
<svg class="ic" style="left:318.20000000000005px;top:493.70000000000005px" width="10.5" height="7.8" viewBox="-1 -1 10.5 7.8"><path d="M0,0L4.25,4.8L8.5,0" fill="none" stroke="#ececec" stroke-width="1.6"/></svg>
<button class="abs blue" style="left:339.00px;top:480.00px;width:95.70px;height:33.00px;"><span class="t" style="left:-253.10px;width:600px;text-align:center;top:2.79px;font-size:12.3px;color:#fff;">Add</span><span class="t" style="left:-253.10px;width:600px;text-align:center;top:16.49px;font-size:12.3px;color:#fff;">Connection</span></button>
<div class="abs sb" style="left:459.00px;top:54.00px;width:4.70px;height:292.50px;"></div>
<div class="abs " style="left:-1.00px;top:532.00px;width:469.00px;height:62.00px;background:#262628;border-top:1px solid #38383a"></div>
<button class="abs blue" style="left:393.20px;top:547.00px;width:59.50px;height:32.30px;border-radius:4px"><span class="t" style="left:-271.20px;width:600px;text-align:center;top:9.96px;font-size:12.1px;color:#fff;">Done</span></button>
<svg class="ic" style="left:458px;top:584.6px" width="8" height="8" viewBox="0 0 8 8"><path d="M7.5,1L1,7.5M7.5,4.500L4.500,7.500" stroke="#9a9a9a" stroke-width="1"/></svg>
</div>
<div class="panel" style="left:101px;top:745px;width:756px;height:255.29999999999995px">
<div class="abs ph" style="height:50.5px"></div>
<span class="t b" style="left:12.80px;top:16.37px;font-size:16.1px;color:#f2f2f2;">World Lore</span>
<svg class="ic" style="left:713px;top:16.5px" width="16" height="16" viewBox="-8 -8 16 16"><path d="M-4.4,-4.4L4.4,4.4M4.4,-4.4L-4.4,4.4" stroke="#e8e8e8" stroke-width="2.35" stroke-linecap="butt"/></svg>
<div class="abs " style="left:21.00px;top:44.00px;width:701.80px;height:66.30px;border-left:1px solid #2b2b2d;border-right:1px solid #2b2b2d"></div>
<div class="abs ph" style="height:50.5px"></div>
<span class="t b" style="left:12.80px;top:16.37px;font-size:16.1px;color:#f2f2f2;">World Lore</span>
<svg class="ic" style="left:713px;top:16.5px" width="16" height="16" viewBox="-8 -8 16 16"><path d="M-4.4,-4.4L4.4,4.4M4.4,-4.4L-4.4,4.4" stroke="#e8e8e8" stroke-width="2.35" stroke-linecap="butt"/></svg>
<svg class="ic" style="left:34.900000000000006px;top:70px" width="9" height="9" viewBox="0 0 9 9"><path d="M.3,.7L8.400,4.500L.3,8.300z" fill="#2fe03a"/></svg>
<span class="t b" style="left:52.20px;top:65.80px;font-size:13.7px;color:#65b7e5;">1: The Blighted Husks</span>
<div class="abs " style="left:52.00px;top:88.50px;width:587.80px;height:1.10px;background:#2cc636"></div>
<svg class="ic" style="left:648.4px;top:69px" width="17.0" height="16.0" viewBox="0 0 17 16"><path d="M10.6,0.10000000000000053 Q11.041,7.354 16.9,7.9 Q11.041,8.446 10.6,15.7 Q10.158999999999999,8.446 4.3,7.9 Q10.158999999999999,7.354 10.6,0.10000000000000053Z" fill="#f5a928"/><path d="M10.6,2.5 Q11.272,7.0360000000000005 14.8,7.9 Q11.272,8.764000000000001 10.6,13.3 Q9.927999999999999,8.764000000000001 6.3999999999999995,7.9 Q9.927999999999999,7.0360000000000005 10.6,2.5Z" fill="#ffe338"/><path d="M2.3,0.0 Q2.564,3.168 4.5,3.6 Q2.564,4.032 2.3,7.2 Q2.0359999999999996,4.032 0.09999999999999964,3.6 Q2.0359999999999996,3.168 2.3,0.0Z" fill="#fbc02f"/><path d="M2.3,1.6 Q2.6599999999999997,3.0 3.5,3.6 Q2.6599999999999997,4.2 2.3,5.6 Q1.94,4.2 1.0999999999999999,3.6 Q1.94,3.0 2.3,1.6Z" fill="#ffe45a"/><path d="M4.9,9.700000000000001 Q5.140000000000001,12.428 6.9,12.8 Q5.140000000000001,13.172 4.9,15.9 Q4.66,13.172 2.9000000000000004,12.8 Q4.66,12.428 4.9,9.700000000000001Z" fill="#fbc02f"/><path d="M4.9,11.100000000000001 Q5.23,12.290000000000001 6.0,12.8 Q5.23,13.31 4.9,14.5 Q4.57,13.31 3.8000000000000003,12.8 Q4.57,12.290000000000001 4.9,11.100000000000001Z" fill="#ffe45a"/></svg>
<svg class="ic" style="left:682.8px;top:66.89999999999998px;opacity:1" width="19.0" height="19.5" viewBox="0 0 19 19.5"><path d="M.7,1.200 L2.400,18.600 Q9.500,19.900 16.600,18.600 L18.300,1.200Z" fill="url(#tg)" fill-opacity=".38"/><path d="M.7,1.200 L2.400,18.600 Q9.500,19.900 16.600,18.600 L18.300,1.200Z" fill="url(#mesh)"/><path d="M1.100,2 L2.500,18.500M17.900,2 L16.500,18.500" stroke="#8a8f95" stroke-width="1" fill="none"/><path d="M2.300,17.500 Q9.500,18.900 16.700,17.500 L16.550,19 Q9.500,20.200 2.450,19Z" fill="#aab1ba"/><path d="M.4,.5 Q9.500,-.3 18.600,.5 L18.400,2.700 Q9.500,2 .6,2.700Z" fill="#868b91"/><path d="M.4,.6 Q9.500,-.2 18.600,.6" stroke="#b4b9bf" stroke-width=".7" fill="none"/></svg>
<button class="abs btn" style="left:21.00px;top:111.00px;width:701.80px;height:32.70px;"><svg class="ic" style="left:307px;top:9.650000000000023px" width="13" height="13" viewBox="0 0 13 13"><path d="M6.5,1V12M1,6.5H12" stroke="#47474a" stroke-width="3"/></svg><span class="t" style="left:325.00px;top:8.85px;font-size:13.7px;color:#f4f4f4;">Add faction</span></button>
<span class="t" style="left:20.40px;top:171.12px;font-size:12.5px;color:#e6e6e6;letter-spacing:0.3px;-webkit-text-stroke:.32px;">Technology</span>
<div class="abs inp" style="left:163.00px;top:159.00px;width:522.30px;height:31.30px;"><span class="t" style="left:7.80px;top:8.56px;font-size:12.33px;color:#efefef;">Runic Magic: An ancient form of magic based on carved symbols.</span></div>
<svg class="ic" style="left:698.6px;top:165.79999999999995px;opacity:1" width="19.0" height="19.5" viewBox="0 0 19 19.5"><path d="M.7,1.200 L2.400,18.600 Q9.500,19.900 16.600,18.600 L18.300,1.200Z" fill="url(#tg)" fill-opacity=".38"/><path d="M.7,1.200 L2.400,18.600 Q9.500,19.900 16.600,18.600 L18.300,1.200Z" fill="url(#mesh)"/><path d="M1.100,2 L2.500,18.500M17.900,2 L16.500,18.500" stroke="#8a8f95" stroke-width="1" fill="none"/><path d="M2.300,17.500 Q9.500,18.900 16.700,17.500 L16.550,19 Q9.500,20.200 2.450,19Z" fill="#aab1ba"/><path d="M.4,.5 Q9.500,-.3 18.600,.5 L18.400,2.700 Q9.500,2 .6,2.700Z" fill="#868b91"/><path d="M.4,.6 Q9.500,-.2 18.600,.6" stroke="#b4b9bf" stroke-width=".7" fill="none"/></svg>
<div class="abs inp" style="left:163.00px;top:208.80px;width:522.30px;height:31.20px;"><span class="t" style="left:7.80px;top:8.46px;font-size:12.33px;color:#efefef;">Alchemy: The art of creating potions and elixirs from natural ingredients.</span></div>
<svg class="ic" style="left:698.6px;top:215.5px;opacity:1" width="19.0" height="19.5" viewBox="0 0 19 19.5"><path d="M.7,1.200 L2.400,18.600 Q9.500,19.900 16.600,18.600 L18.300,1.200Z" fill="url(#tg)" fill-opacity=".38"/><path d="M.7,1.200 L2.400,18.600 Q9.500,19.900 16.600,18.600 L18.300,1.200Z" fill="url(#mesh)"/><path d="M1.100,2 L2.500,18.500M17.900,2 L16.500,18.500" stroke="#8a8f95" stroke-width="1" fill="none"/><path d="M2.300,17.500 Q9.500,18.900 16.700,17.500 L16.550,19 Q9.500,20.200 2.450,19Z" fill="#aab1ba"/><path d="M.4,.5 Q9.500,-.3 18.600,.5 L18.400,2.700 Q9.500,2 .6,2.700Z" fill="#868b91"/><path d="M.4,.6 Q9.500,-.2 18.600,.6" stroke="#b4b9bf" stroke-width=".7" fill="none"/></svg>
<div class="abs sb" style="left:746.70px;top:136.00px;width:4.50px;height:83.40px;"></div>
<svg class="ic" style="left:746px;top:245.29999999999995px" width="8" height="8" viewBox="0 0 8 8"><path d="M7.5,1L1,7.5M7.5,4.500L4.500,7.500" stroke="#9a9a9a" stroke-width="1"/></svg>
</div>
</body></html>
